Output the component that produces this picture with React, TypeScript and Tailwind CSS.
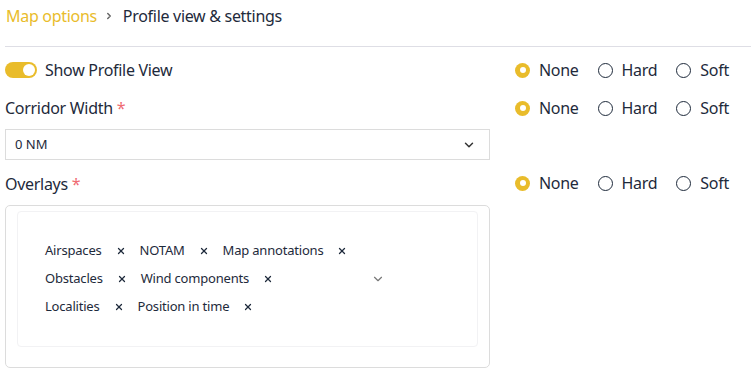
import React, {useState} from 'react';
import {ChevronDown, ChevronRight, X} from 'lucide-react';

const font = {fontFamily: '"Noto Sans", "Open Sans", sans-serif'};

type Choice = 'none' | 'hard' | 'soft';

function RadioGroup({value, onChange}: {value: Choice; onChange: (v: Choice) => void}) {
	const options: {key: Choice; label: string}[] = [
		{key: 'none', label: 'None'},
		{key: 'hard', label: 'Hard'},
		{key: 'soft', label: 'Soft'},
	];
	return (
		<div className="flex items-center gap-[19px]">
			{options.map((o) => (
				<label key={o.key} className="flex items-center gap-[9px] cursor-pointer" onClick={() => onChange(o.key)}>
					{value === o.key ? (
						<span className="size-[15px] rounded-full bg-[#e9bc2b] flex items-center justify-center">
							<span className="size-[6px] rounded-full bg-white"/>
						</span>
					) : (
						<span className="size-[15px] rounded-full border border-[#1e2a3b] bg-white"/>
					)}
					<span className="text-[16px] tracking-[-0.3px] text-[#1e2a3b]">{o.label}</span>
				</label>
			))}
		</div>
	);
}

function Tag({text}: {text: string}) {
	return (
		<span className="flex items-center gap-[14px] pr-[14px] text-[13px] tracking-[-0.2px] text-[#1e2a3b]">
			{text}
			<X className="size-[10px] text-[#1e2a3b]" strokeWidth={3}/>
		</span>
	);
}

function App() {
	const [showProfile, setShowProfile] = useState(true);
	const [radios, setRadios] = useState<Choice[]>(['none', 'none', 'none']);
	const setRadio = (i: number) => (v: Choice) => setRadios((r) => r.map((x, j) => (j === i ? v : x)));

	return (
		<div className="w-[751px] h-[377px] bg-white overflow-hidden" style={font}>
			<div className="flex items-center h-[30px] pl-[6px] pt-[1px] text-[16px] tracking-[-0.3px]">
				<span className="text-[#e9bc2b]">Map options</span>
				<ChevronRight className="size-[10px] ml-[7px] mr-[9px] text-[#666]" strokeWidth={3.5}/>
				<span className="text-[#1e2a3b]">Profile view &amp; settings</span>
			</div>
			<div className="ml-[5px] mt-[16px] border-t border-[#dedee5]"/>

			<div className="flex pl-[5px] pt-[13px]">
				<div className="w-[485px] flex flex-col">
					<div className="flex items-center h-[20px] gap-[8px]">
						<button
							onClick={() => setShowProfile(!showProfile)}
							className={`w-[32px] h-[16px] rounded-full flex items-center px-[2px] ${showProfile ? 'bg-[#e9bc2b] justify-end' : 'bg-gray-300 justify-start'}`}
						>
							<span className="size-[12px] rounded-full bg-white"/>
						</button>
						<span className="text-[16px] tracking-[-0.3px] text-[#1e2a3b]">Show Profile View</span>
					</div>
					<div className="flex items-center h-[20px] mt-[18px] text-[16px] tracking-[-0.3px] text-[#1e2a3b]">
						Corridor Width <span className="text-[#ef6b73] ml-[4px]">*</span>
					</div>
					<div className="mt-[11px] h-[31px] border border-[#dcdcdc] flex items-center justify-between pl-[9px] pr-[13px]">
						<span className="text-[13px] text-[#1e2a3b]">0 NM</span>
						<ChevronDown className="size-[14px] text-[#333]" strokeWidth={2.5}/>
					</div>
					<div className="flex items-center h-[20px] mt-[14px] text-[16px] tracking-[-0.3px] text-[#1e2a3b]">
						Overlays <span className="text-[#ef6b73] ml-[4px]">*</span>
					</div>
					<div className="mt-[11px] h-[163px] border border-[#dcdcdc] rounded-[5px] px-[11px] pt-[5px]">
						<div className="h-[136px] border border-[#f2f2f4] rounded-[4px] flex items-center pl-[27px] pr-[90px]">
							<div className="flex flex-col gap-[8px] w-[340px]">
								<div className="flex h-[20px] items-center">
									<Tag text="Airspaces"/>
									<Tag text="NOTAM"/>
									<Tag text="Map annotations"/>
								</div>
								<div className="flex h-[20px] items-center relative">
									<Tag text="Obstacles"/>
									<Tag text="Wind components"/>
									<ChevronDown className="absolute left-[326px] size-[14px] text-[#777]" strokeWidth={2}/>
								</div>
								<div className="flex h-[20px] items-center">
									<Tag text="Localities"/>
									<Tag text="Position in time"/>
								</div>
							</div>
						</div>
					</div>
				</div>

				<div className="flex flex-col pl-[25px]">
					<div className="h-[20px] flex items-center">
						<RadioGroup value={radios[0]} onChange={setRadio(0)}/>
					</div>
					<div className="h-[20px] flex items-center mt-[18px]">
						<RadioGroup value={radios[1]} onChange={setRadio(1)}/>
					</div>
					<div className="h-[20px] flex items-center mt-[55px]">
						<RadioGroup value={radios[2]} onChange={setRadio(2)}/>
					</div>
				</div>
			</div>
		</div>
	);
}

export default App;
